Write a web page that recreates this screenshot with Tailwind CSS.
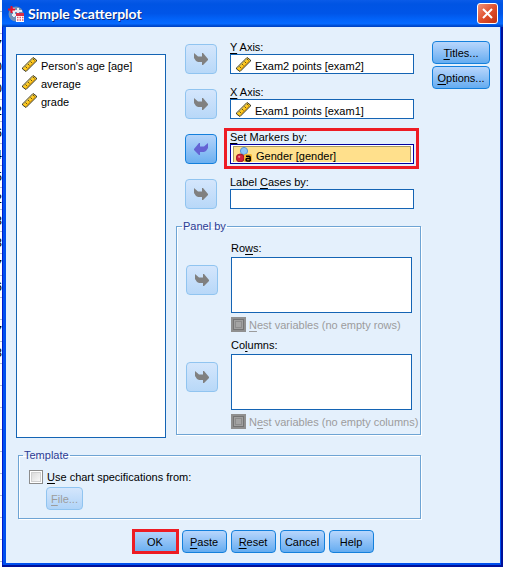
<!DOCTYPE html>
<html lang="en">
<head>
  <meta charset="UTF-8" />
  <meta name="viewport" content="width=device-width, initial-scale=1.0" />
  <title>Simple Scatterplot</title>
  <script src="https://cdn.jsdelivr.net/npm/@tailwindcss/browser@4"></script>
</head>
<body class="relative bg-white text-black text-[11px] leading-[14px] font-['Liberation_Sans',Arial,sans-serif]">

  <!-- Shared icons -->
  <svg class="hidden">
    <symbol id="ruler" viewBox="0 0 15 15">
      <path d="M0.5 11 L11 0.5 L14.5 3 V4 L4 14.5 L0.5 12 Z" fill="#ffcb1f" stroke="#3a3a30" stroke-width="1" />
      <path d="M1.5 11 L11 1.5" stroke="#b0a878" stroke-width="1" />
      <path d="M3.5 9.5 L5 11 M6 7 L7.5 8.5 M8.5 4.5 L10 6 M11 2 L12.5 3.5" stroke="#6a5410" stroke-width="1" />
      <path d="M4.5 12.5 L13 4" stroke="#e09c10" stroke-width="1" />
    </symbol>
    <symbol id="arrow" viewBox="0 0 14 13">
      <path d="M0 0 L4 3.5 H8 V0 H9 L14 6 V7 L9 12 H8 V9 H4 L2 8 L0 5 Z" fill="currentColor" />
    </symbol>
    <symbol id="nominal" viewBox="0 0 16 15">
      <circle cx="8" cy="4" r="3.6" fill="#8fc4f5" stroke="#5a96d4" />
      <circle cx="4.2" cy="11" r="4" fill="#d3203a" stroke="#8f1020" stroke-width="0.8" />
      <circle cx="3.2" cy="9.8" r="1.1" fill="#f58a98" />
      <rect x="8" y="7" width="8" height="8" rx="1.5" fill="#f5b733" />
      <path d="M10 9.2 H13 Q14.2 9.2 14.2 10.5 V14 M14 11.5 H11.3 Q10 11.6 10 12.8 Q10 14 11.3 14 H14.2" fill="none" stroke="#000" stroke-width="1.5" />
    </symbol>
  </svg>

  <!-- Data sheet showing at the edge of the dialog -->
  <div class="absolute inset-0 overflow-hidden" aria-hidden="true">
    <div class="w-[2px] text-[13px] leading-[21px]">
      <div class="h-3 border-b border-[#b4bfd2]"></div>
      <div class="h-[22px] border-b border-[#b4bfd2]"></div>
      <div class="flex h-[22px] justify-end overflow-hidden border-b border-[#b4bfd2]">7</div>
      <div class="flex h-[22px] justify-end overflow-hidden border-b border-[#b4bfd2]">0</div>
      <div class="flex h-[22px] justify-end overflow-hidden border-b border-[#b4bfd2]">0</div>
      <div class="flex h-[22px] justify-end overflow-hidden border-b border-[#b4bfd2]">2</div>
      <div class="flex h-[22px] justify-end overflow-hidden border-b border-[#b4bfd2]">6</div>
      <div class="flex h-[22px] justify-end overflow-hidden border-b border-[#b4bfd2]">4</div>
      <div class="flex h-[22px] justify-end overflow-hidden border-b border-[#b4bfd2]">5</div>
      <div class="flex h-[22px] justify-end overflow-hidden border-b border-[#b4bfd2]">2</div>
      <div class="flex h-[22px] justify-end overflow-hidden border-b border-[#b4bfd2]">8</div>
      <div class="flex h-[22px] justify-end overflow-hidden border-b border-[#b4bfd2]">8</div>
      <div class="flex h-[22px] justify-end overflow-hidden border-b border-[#b4bfd2]">7</div>
      <div class="flex h-[22px] justify-end overflow-hidden border-b border-[#b4bfd2]">6</div>
      <div class="h-[22px] border-b border-[#b4bfd2]"></div>
      <div class="flex h-[22px] justify-end overflow-hidden border-b border-[#b4bfd2]">7</div>
      <div class="flex h-[22px] justify-end overflow-hidden border-b border-[#b4bfd2]">8</div>
      <div class="h-[22px] border-b border-[#b4bfd2]"></div>
      <div class="h-[22px] border-b border-[#b4bfd2]"></div>
      <div class="h-[22px] border-b border-[#b4bfd2]"></div>
      <div class="h-[22px] border-b border-[#b4bfd2]"></div>
      <div class="h-[22px] border-b border-[#b4bfd2]"></div>
      <div class="h-[22px] border-b border-[#b4bfd2]"></div>
      <div class="h-[22px] border-b border-[#b4bfd2]"></div>
      <div class="h-[22px] border-b border-[#b4bfd2]"></div>
      <div class="h-[22px] border-b border-[#b4bfd2]"></div>
    </div>
  </div>

  <!-- Dialog -->
  <div class="relative mx-[2px] bg-[linear-gradient(90deg,#0019cf_0,#0019cf_1px,#0050ee_1px,#0050ee_calc(100%-2px),#00109a_calc(100%-2px))] border-b-2 border-[#00109a] pr-[3px] pb-[2px] pl-1">
    <header class="-mr-[3px] -ml-1 flex h-[27px] items-center bg-[linear-gradient(#0a5be8_0,#0054e3_15%,#0055e8_50%,#0262f8_70%,#066aff_88%,#0050d8_94%,#0040c0_100%)] pl-1 pr-[5px]">
      <svg class="ml-[2px] size-4" viewBox="0 0 16 16">
        <circle cx="8" cy="8" r="7.5" fill="#6f90b8" />
        <path d="M4 5 H14 M4 9 H9 M6 2 V11 M10 2 V7" stroke="#e6edf5" stroke-width="2" />
        <path d="M0 3.5 H7 M3.5 0 V7" stroke="#e8102a" stroke-width="2" />
        <rect x="8" y="7" width="8" height="9" fill="#fff" />
        <rect x="8" y="7" width="8" height="3" fill="#d83048" />
        <path d="M9 11.5 H15.5 M9 14 H15.5" stroke="#e0566a" stroke-width="1.5" stroke-dasharray="1.5 1" />
      </svg>
      <h1 class="ml-1 flex-1 text-[14px] leading-5 font-bold text-white [text-shadow:1px_1px_0_#0a2a80] font-[Lato,sans-serif]">Simple Scatterplot</h1>
      <button aria-label="Close" class="flex size-[21px] items-center justify-center rounded-[3px] border border-white bg-linear-to-br from-[#f09078] via-[#e0502c] to-[#c03010]">
        <svg class="size-[11px]" viewBox="0 0 11 11"><path d="M1 1 L10 10 M10 1 L1 10" stroke="#fff" stroke-width="2" /></svg>
      </button>
    </header>

    <main class="bg-[#e4f0fc] pt-[13px] pb-[10px]">
      <div class="flex pr-[10px] pl-[10px]">
        <div class="min-w-0 flex-1">
          <div class="flex gap-[10px]">
            <!-- Variables -->
            <ul class="mt-[14px] min-w-0 flex-1 border border-[#1464b4] bg-white pt-[2px] pl-[5px]">
              <li class="flex h-[18px] items-start gap-1"><svg class="size-[15px]"><use href="#ruler" /></svg><span class="pt-[2px]">Person's age [age]</span></li>
              <li class="flex h-[18px] items-start gap-1"><svg class="size-[15px]"><use href="#ruler" /></svg><span class="pt-[2px]">average</span></li>
              <li class="flex h-[18px] items-start gap-1"><svg class="size-[15px]"><use href="#ruler" /></svg><span class="pt-[2px]">grade</span></li>
            </ul>

            <div class="w-[245px] shrink-0 pb-[3px]">
              <div class="flex flex-col gap-[11px] pr-[7px] pl-[9px]">
                <div class="flex items-end gap-[13px]">
                  <button aria-label="Move to Y Axis" class="flex h-[30px] w-8 items-center justify-center rounded-[4px] border border-[#90c4f0] bg-linear-to-b from-[#d4e6fc] to-[#b8d8f8] text-[#808080]"><svg class="h-[13px] w-[14px]"><use href="#arrow" /></svg></button>
                  <div class="flex-1">
                    <label for="yaxis" class="block"><u class="underline-offset-2">Y</u> Axis:</label>
                    <div class="flex h-5 items-start gap-1 border border-[#1464b4] bg-white pt-[2px] pl-[5px]">
                      <svg class="size-[15px] shrink-0"><use href="#ruler" /></svg>
                      <input id="yaxis" readonly value="Exam2 points [exam2]" class="h-[17px] min-w-0 flex-1 pt-[1px] outline-none" />
                    </div>
                  </div>
                </div>
                <div class="flex items-end gap-[13px]">
                  <button aria-label="Move to X Axis" class="flex h-[30px] w-8 items-center justify-center rounded-[4px] border border-[#90c4f0] bg-linear-to-b from-[#d4e6fc] to-[#b8d8f8] text-[#808080]"><svg class="h-[13px] w-[14px]"><use href="#arrow" /></svg></button>
                  <div class="flex-1">
                    <label for="xaxis" class="block"><u class="underline-offset-2">X</u> Axis:</label>
                    <div class="flex h-5 items-start gap-1 border border-[#1464b4] bg-white pt-[2px] pl-[5px]">
                      <svg class="size-[15px] shrink-0"><use href="#ruler" /></svg>
                      <input id="xaxis" readonly value="Exam1 points [exam1]" class="h-[17px] min-w-0 flex-1 pt-[1px] outline-none" />
                    </div>
                  </div>
                </div>
                <div class="flex items-end gap-[13px]">
                  <button aria-label="Remove from Set Markers by" class="flex h-[30px] w-8 items-center justify-center rounded-[4px] border border-[#1480dc] bg-linear-to-b from-[#b4d4fa] to-[#6cb0f0] text-[#6464d4]"><svg class="h-[13px] w-[14px] -scale-x-100"><use href="#arrow" /></svg></button>
                  <div class="relative flex-1">
                    <label for="markers" class="block"><u class="underline-offset-2">S</u>et Markers by:</label>
                    <div class="h-5 border border-[#0000a0] bg-white px-[2px] pt-[1px] pb-[1px]">
                      <div class="flex h-4 items-start gap-1 border-x border-t border-[#a89860] bg-[#ffe08c] pl-[2px]">
                        <svg class="h-[15px] w-4 shrink-0"><use href="#nominal" /></svg>
                        <input id="markers" readonly value="Gender [gender]" class="h-[15px] min-w-0 flex-1 pt-[2px] outline-none" />
                      </div>
                    </div>
                    <div class="pointer-events-none absolute -top-[2px] -right-[5px] -bottom-[5px] -left-[6px] border-3 border-[#ed1c24]"></div>
                  </div>
                </div>
                <div class="flex items-end gap-[13px]">
                  <button aria-label="Move to Label Cases by" class="flex h-[30px] w-8 items-center justify-center rounded-[4px] border border-[#90c4f0] bg-linear-to-b from-[#d4e6fc] to-[#b8d8f8] text-[#808080]"><svg class="h-[13px] w-[14px]"><use href="#arrow" /></svg></button>
                  <div class="flex-1">
                    <label for="cases" class="block">Label <u class="underline-offset-2">C</u>ases by:</label>
                    <input id="cases" class="block h-5 w-full border border-[#1464b4] bg-white px-1 outline-none" />
                  </div>
                </div>
              </div>

              <fieldset class="mt-[10px] min-w-0 border border-[#6ea4d4] pr-2 pb-[5px] pl-[9px] shadow-[1px_1px_0_#fff,inset_1px_1px_0_#fff]">
                <legend class="-ml-1 px-[1px] text-[#2c3c94]">Panel by</legend>
                <div class="flex items-start gap-[13px] pt-2">
                  <button aria-label="Move to Rows" class="mt-6 flex h-[30px] w-8 shrink-0 items-center justify-center rounded-[4px] border border-[#90c4f0] bg-linear-to-b from-[#d4e6fc] to-[#b8d8f8] text-[#808080]"><svg class="h-[13px] w-[14px]"><use href="#arrow" /></svg></button>
                  <div class="min-w-0 flex-1">
                    <label for="rows" class="block h-4">Ro<u class="underline-offset-2">w</u>s:</label>
                    <textarea id="rows" class="block h-14 w-full resize-none border border-[#1464b4] bg-white outline-none"></textarea>
                    <label class="mt-1 flex h-[15px] items-center gap-[3px] whitespace-nowrap text-[#9c9c9c]">
                      <input type="checkbox" disabled class="size-[15px] shrink-0 appearance-none border-2 border-[#909090] bg-[#a4a4a4] shadow-[inset_0_0_0_1px_#747474,inset_0_0_0_2px_#a0a0a0,inset_0_0_0_3px_#8c8c8c]" />
                      <span><u class="underline-offset-2">N</u>est variables (no empty rows)</span>
                    </label>
                  </div>
                </div>
                <div class="flex items-start gap-[13px] pt-[6px]">
                  <button aria-label="Move to Columns" class="mt-6 flex h-[30px] w-8 shrink-0 items-center justify-center rounded-[4px] border border-[#90c4f0] bg-linear-to-b from-[#d4e6fc] to-[#b8d8f8] text-[#808080]"><svg class="h-[13px] w-[14px]"><use href="#arrow" /></svg></button>
                  <div class="min-w-0 flex-1">
                    <label for="columns" class="block h-4">Co<u class="underline-offset-2">l</u>umns:</label>
                    <textarea id="columns" class="block h-14 w-full resize-none border border-[#1464b4] bg-white outline-none"></textarea>
                    <label class="mt-1 flex h-[15px] items-center gap-[3px] whitespace-nowrap text-[#9c9c9c]">
                      <input type="checkbox" disabled class="size-[15px] shrink-0 appearance-none border-2 border-[#909090] bg-[#a4a4a4] shadow-[inset_0_0_0_1px_#747474,inset_0_0_0_2px_#a0a0a0,inset_0_0_0_3px_#8c8c8c]" />
                      <span>N<u class="underline-offset-2">e</u>st variables (no empty columns)</span>
                    </label>
                  </div>
                </div>
              </fieldset>
            </div>
          </div>

          <fieldset class="mt-[10px] ml-[2px] border border-[#6ea4d4] pb-2 pl-[10px] shadow-[1px_1px_0_#fff,inset_1px_1px_0_#fff]">
            <legend class="-ml-[6px] px-[1px] text-[#2c3c94]">Template</legend>
            <label class="flex items-center gap-1 pt-2">
              <input type="checkbox" class="size-[14px] appearance-none border border-[#8c8c8c] bg-linear-to-br from-[#d4d4d4] to-white shadow-[inset_0_0_0_1px_#fff,inset_0_0_0_2px_#d0d0d0]" />
              <span><u class="underline-offset-2">U</u>se chart specifications from:</span>
            </label>
            <button disabled class="mt-[3px] ml-[17px] block h-[23px] w-[37px] rounded-[4px] border border-[#90c4f0] bg-linear-to-b from-[#d4e6fc] to-[#b0d4f8] text-[#9c9c9c]"><u class="underline-offset-2">F</u>ile...</button>
          </fieldset>
        </div>

        <div class="ml-[11px] flex w-[58px] flex-col gap-[2px] pt-[1px]">
          <button class="h-[23px] rounded-[4px] border border-[#1480dc] bg-linear-to-b from-[#b8d6fc] to-[#64acf0]"><u class="underline-offset-2">T</u>itles...</button>
          <button class="h-[23px] rounded-[4px] border border-[#1480dc] bg-linear-to-b from-[#b8d6fc] to-[#64acf0]"><u class="underline-offset-2">O</u>ptions...</button>
        </div>
      </div>

      <div class="mt-[11px] flex justify-center gap-1">
        <button class="h-[23px] w-[45px] bg-linear-to-b from-[#b8d6fc] to-[#64acf0] outline-3 -outline-offset-2 outline-[#ed1c24]">OK</button>
        <button class="h-[23px] w-[45px] rounded-[4px] border border-[#1480dc] bg-linear-to-b from-[#b8d6fc] to-[#64acf0]"><u class="underline-offset-2">P</u>aste</button>
        <button class="h-[23px] w-[45px] rounded-[4px] border border-[#1480dc] bg-linear-to-b from-[#b8d6fc] to-[#64acf0]"><u class="underline-offset-2">R</u>eset</button>
        <button class="h-[23px] w-[45px] rounded-[4px] border border-[#1480dc] bg-linear-to-b from-[#b8d6fc] to-[#64acf0]">Cancel</button>
        <button class="h-[23px] w-[45px] rounded-[4px] border border-[#1480dc] bg-linear-to-b from-[#b8d6fc] to-[#64acf0]">Help</button>
      </div>
    </main>
  </div>
</body>
</html>
